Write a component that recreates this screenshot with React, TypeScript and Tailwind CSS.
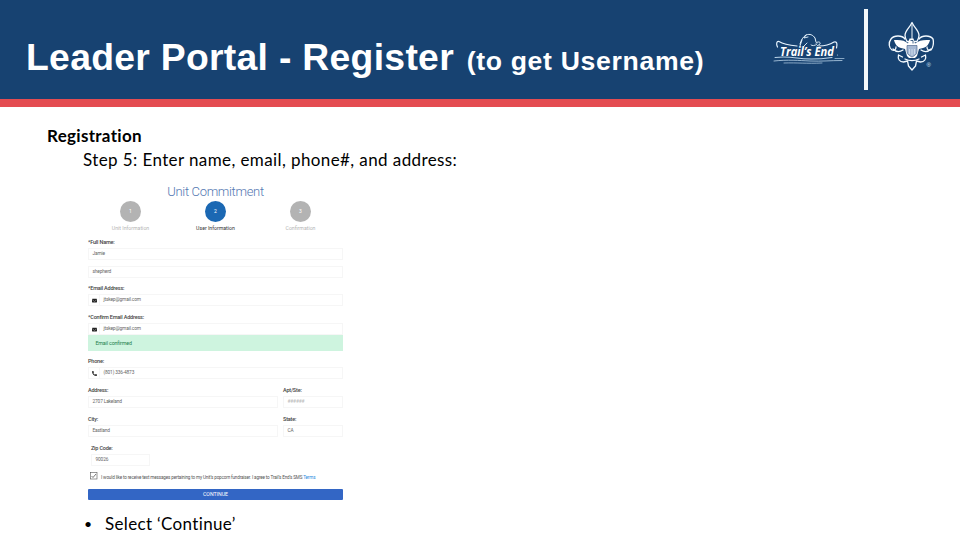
import type { ReactNode } from "react";
import { FaEnvelope, FaPhoneAlt } from "react-icons/fa";

interface Step {
  number: string;
  label: string;
  active?: boolean;
}

const steps: Step[] = [
  { number: "1", label: "Unit Information" },
  { number: "2", label: "User Information", active: true },
  { number: "3", label: "Confirmation" },
];

const TrailsEndLogo = () => (
  <svg className="mt-[33px] h-[32px] w-[74px]" viewBox="0 0 74 32" fill="none">
    <g stroke="#e8f5ff" strokeLinecap="round" strokeLinejoin="round">
      <path d="M4.500 14C3 11 3.500 8 6 8.500c4 2.500 8 3.500 18 4.500" strokeWidth="1.200" />
      <path d="M46 13c7 0 11-1.500 15-4 3-1 3.500 2 2.500 6" strokeWidth="1.200" />
      <path d="M27 11c1-4 3-7 6-9 4-1.500 7 0 9 3l1 4" strokeWidth="1" />
      <path d="M33 2l-2 3 4-1M29 7l-2 6M34 10l-3 3M38 12c1 1 4 1 6-1M43 10c2-2 5-1 4 1l-3 2" strokeWidth="0.900" />
    </g>
    <g stroke="#b9d3e8" strokeLinecap="round">
      <path d="M2 24.500c9-1 14-.5 22 .5 12 2 24 1 35-.5" strokeWidth="1.100" />
      <path d="M1 28c14-1.500 25-.5 36 0 12 .5 20-.5 32-.500" strokeWidth="0.800" />
      <path d="M11 30c14-.5 22 .8 38 0M62 25.500h9" strokeWidth="0.700" />
    </g>
    <text
      x="7"
      y="22.700"
      textLength="54"
      lengthAdjust="spacingAndGlyphs"
      fill="#fff"
      className="font-['Open_Sans',sans-serif] text-[11.500px] font-bold italic"
    >
      Trail’s End
    </text>
    <circle cx="64.500" cy="22" r="0.600" fill="#a9c5dd" />
  </svg>
);

const ScoutLogo = () => (
  <svg className="mt-[21px] h-[52px] w-[46px]" viewBox="0 0 46 52" fill="none">
    <g stroke="#f4faff" strokeWidth="1.300" strokeLinejoin="round" strokeLinecap="round">
      <path d="M24 1.500c-2 5-7 8-7 13 0 2 1 4 2 6h10c1-2 2-4 2-6 0-5-5-8-7-13z" />
      <path d="M24 4v14" strokeWidth="1" />
      <path d="M17 18C14 14 6 14 3 18c-3 4-2 9 1 11 3 1 4-1 4-3" />
      <path d="M31 18c3-4 11-4 14 0 1 4 0 9-2 11-3 1-4-1-4-3" />
      <path d="M5 28c3 3 7 3 10 1M43 28c-3 3-7 3-10 1" />
      <path d="M10.500 34c-1 4 1 7 5 7l4-1 1 5 3.500 4 3.500-4 1-5 4 1c4 0 6-3 5-7l-4 2M10.500 34l4 2" />
      <path d="M17 38c4 2 10 2 14 0" />
    </g>
    <path
      d="M21.500 17.500h4l1.500 5c4-3 8-4 15-3.500-1 4-3 7-7 8l-4 1-2 7-2 2h-6l-2-2-2-7-4-1c-4-1-6-4-7-8 7-.5 11 .5 14 3.500z"
      fill="#fff"
    />
    <path d="M19 24.500h10v6c0 3-3 4.500-5 5.500-2-1-5-2.500-5-5.500z" fill="#a5b8d3" stroke="#38557f" strokeWidth="0.600" />
    <path d="M21.500 28v5M24 28v6.500M26.500 28v5" stroke="#dce7f3" strokeWidth="0.700" />
    <path d="M22.500 19.500h2.500v3" stroke="#174271" strokeWidth="0.800" />
    <text x="38.500" y="45.500" fill="#dceaf8" className="font-['Liberation_Sans',sans-serif] text-[6px]">
      ®
    </text>
  </svg>
);

const Label = ({ children }: { children: ReactNode }) => (
  <div className="h-[12px] text-[5.5px] leading-[12px] font-medium tracking-[-0.2px] text-[#444]">
    {children}
  </div>
);

const Input = ({ children, icon }: { children: ReactNode; icon?: ReactNode }) => (
  <div className="flex h-[12px] items-center border border-[#f6f6f6] text-[4.8px] leading-[10px] text-[#666]">
    {icon && (
      <span className="flex h-full w-[11px] items-center justify-center border-r border-[#f6f6f6] text-[5px] text-[#222]">
        {icon}
      </span>
    )}
    <span className="pl-[3.5px] tracking-[-0.15px]">{children}</span>
  </div>
);

const RegistrationForm = () => (
  <div className="ml-[88px] w-[255px] font-['Roboto',sans-serif]">
    <h2 className="h-[18px] text-center text-[13px] leading-[18px] font-light tracking-[-0.33px] text-[#5478b2]">
      Unit Commitment
    </h2>
    <div className="flex justify-between">
      {steps.map((step) => (
        <div key={step.label} className="flex w-[85px] flex-col items-center">
          <span
            className={`flex size-[20.5px] items-center justify-center rounded-full text-[5px] text-white ${
              step.active ? "bg-[#1b68b3]" : "bg-[#b3b3b3]"
            }`}
          >
            {step.number}
          </span>
          <span
            className={`mt-[2.5px] h-[9px] text-[5.2px] leading-[9px] whitespace-nowrap ${
              step.active ? "text-[#333]" : "text-[#b5b5b5]"
            }`}
          >
            {step.label}
          </span>
        </div>
      ))}
    </div>

    <div className="mt-[3px]">
      <Label>*Full Name:</Label>
      <Input>Jamie</Input>
      <div className="mt-[6px]">
        <Input>shepherd</Input>
      </div>
    </div>
    <div className="mt-[4px]">
      <Label>*Email Address:</Label>
      <Input icon={<FaEnvelope />}>jtskep@gmail.com</Input>
    </div>
    <div className="mt-[5px]">
      <Label>*Confirm Email Address:</Label>
      <Input icon={<FaEnvelope />}>jtskep@gmail.com</Input>
      <div className="h-[16px] bg-[#cef4df] pl-[7.5px] text-[5.3px] leading-[16px] tracking-[-0.15px] text-[#25804e]">
        Email confirmed
      </div>
    </div>
    <div className="mt-[4px]">
      <Label>Phone:</Label>
      <Input icon={<FaPhoneAlt />}>(801) 336-4873</Input>
    </div>
    <div className="mt-[5px] grid grid-cols-[190px_60px] gap-x-[5px] gap-y-[5px]">
      <div>
        <Label>Address:</Label>
        <Input>2707 Lakeland</Input>
      </div>
      <div>
        <Label>Apt/Ste:</Label>
        <Input>
          <span className="text-[#bbb]">######</span>
        </Input>
      </div>
      <div>
        <Label>City:</Label>
        <Input>Eastland</Input>
      </div>
      <div>
        <Label>State:</Label>
        <Input>CA</Input>
      </div>
    </div>
    <div className="mt-[5px] ml-[3px] w-[59px]">
      <Label>Zip Code:</Label>
      <Input>90026</Input>
    </div>

    <div className="mt-[5px] flex h-[10px] items-center pl-[2px]">
      <svg className="mt-[-1px] size-[8px]" viewBox="0 0 8 8" fill="none" stroke="#555">
        <rect x="0.5" y="0.5" width="6.5" height="6.5" strokeWidth="0.6" />
        <path d="M1.5 4l1.5 1.5L6 2" strokeWidth="0.8" />
      </svg>
      <span className="mt-[3px] ml-[3px] text-[4.6px] leading-[10px] tracking-[-0.15px] whitespace-nowrap text-[#555]">
        I would like to receive text messages pertaining to my Unit’s popcorn fundraiser. I agree to Trail’s End’s SMS{" "}
        <span className="text-[#2b8be0]">Terms</span>
      </span>
    </div>
    <button className="mt-[8px] block h-[10.5px] w-full rounded-[1px] bg-[#3366c5] text-center text-[5.2px] leading-[10.5px] text-white">
      CONTINUE
    </button>
  </div>
);

export default function App() {
  return (
    <div className="h-[540px] w-[960px] overflow-hidden bg-white">
      <header className="flex h-[107px] border-b-[8px] border-[#e44c51] bg-[#174271]">
        <h1 className="w-[773px] pt-[32px] pl-[26px] font-['Liberation_Sans',sans-serif] text-[37.3px] leading-[50px] font-bold whitespace-nowrap text-white">
          <span className="tracking-[0.3px]">Leader Portal - Register </span>
          <span className="ml-[2px] text-[26.6px] tracking-[0.68px]">(to get Username)</span>
        </h1>
        <TrailsEndLogo />
        <div className="mt-[9px] ml-[17px] h-[81px] w-[4px] bg-[#f2f7fb]" />
        <div className="ml-[20px]">
          <ScoutLogo />
        </div>
      </header>

      <main className="font-['Lato',sans-serif] text-[17px] text-black">
        <p className="mt-[17px] pl-[47px] leading-[24px] font-bold tracking-[0.3px]">Registration</p>
        <p className="pl-[83px] leading-[23px] tracking-[0.4px]">
          Step 5: Enter name, email, phone#, and address:
        </p>
        <div className="mt-[12px]">
          <RegistrationForm />
        </div>
        <div className="mt-[12px] flex pl-[83px] leading-[24px] tracking-[0.34px]">
          <span className="w-[22px] pl-[1px] text-[14px]">•</span>
          <span>Select ‘Continue’</span>
        </div>
      </main>
    </div>
  );
}
